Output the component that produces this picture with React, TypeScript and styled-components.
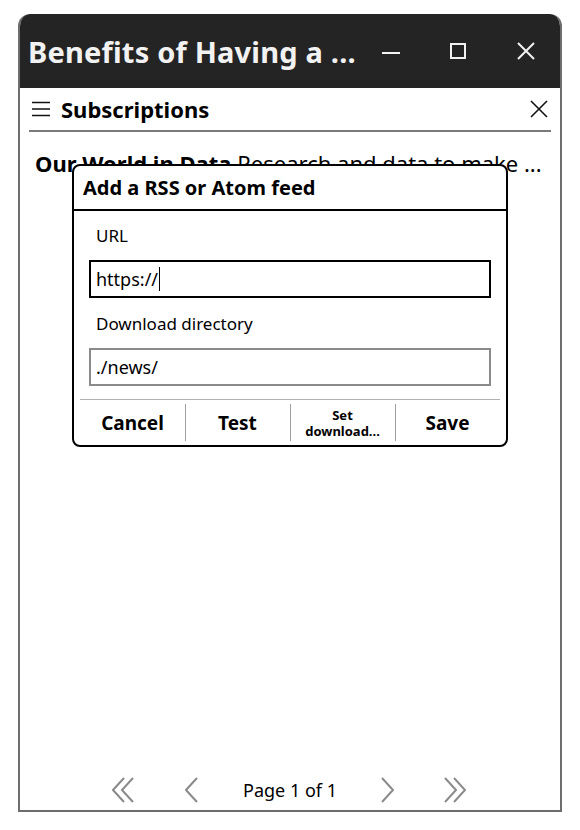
import styled, { createGlobalStyle } from "styled-components";

const GlobalStyle = createGlobalStyle`
  html, body {
    margin: 0;
    padding: 0;
    background: #ffffff;
    font-family: "Noto Sans", "Open Sans", sans-serif;
    color: #000;
  }
`;

const Page = styled.div`
  width: 580px;
  height: 830px;
  padding: 14px 18px 0;
  box-sizing: border-box;
`;

const Window = styled.div`
  width: 544px;
  height: 798px;
  display: flex;
  flex-direction: column;
  border: 2px solid #6d6d6d;
  border-top: none;
  border-radius: 12px 12px 0 0;
  box-sizing: border-box;
  overflow: hidden;
  background: #fff;
`;

const TitleBar = styled.div`
  height: 74px;
  flex-shrink: 0;
  background: #242424;
  display: flex;
  align-items: center;
  padding: 0 2px 0 8px;
  margin: 0 -2px;
  border-radius: 12px 12px 0 0;
  color: #f2f2f2;
`;

const WindowTitle = styled.div`
  flex: 1;
  min-width: 0;
  font-size: 29px;
  font-weight: 700;
  white-space: nowrap;
  overflow: hidden;
  letter-spacing: 0.2px;
  padding-left: 2px;
`;

const WinButton = styled.div<{ $w: number }>`
  width: ${(p) => p.$w}px;
  flex-shrink: 0;
  height: 74px;
  display: flex;
  align-items: center;
  justify-content: center;
`;

const Body = styled.div`
  flex: 1;
  position: relative;
  display: flex;
  flex-direction: column;
`;

const Header = styled.div`
  margin: 0 9px;
  height: 42px;
  display: flex;
  align-items: center;
  border-bottom: 2px solid #7a7a7a;
  padding: 0 3px;
`;

const HeaderTitle = styled.div`
  flex: 1;
  font-size: 22px;
  font-weight: 700;
  margin-left: 11px;
`;

const List = styled.div`
  flex: 1;
  padding: 17px 15px 0;
`;

const Item = styled.div`
  font-size: 22px;
  line-height: 28px;
  white-space: nowrap;
  b {
    font-weight: 700;
  }
`;

const Pager = styled.div`
  height: 40px;
  display: flex;
  align-items: center;
  justify-content: center;
`;

const PagerButton = styled.div`
  width: 68px;
  display: flex;
  align-items: center;
  justify-content: center;
`;

const PageLabel = styled.div`
  font-size: 18px;
  width: 128px;
  text-align: center;
`;

const Dialog = styled.div`
  position: absolute;
  left: 52px;
  top: 76px;
  width: 436px;
  box-sizing: border-box;
  background: #fff;
  border: 2px solid #000;
  border-radius: 8px;
`;

const DialogTitle = styled.div`
  height: 43px;
  display: flex;
  align-items: center;
  padding: 0 9px;
  font-size: 20px;
  font-weight: 700;
  border-bottom: 2px solid #000;
`;

const DialogBody = styled.div`
  padding: 13px 15px 13px;
`;

const Label = styled.div<{ $gap?: number }>`
  font-size: 17px;
  line-height: 24px;
  padding-left: 7px;
  margin-top: ${(p) => p.$gap ?? 0}px;
  margin-bottom: 12px;
`;

const Field = styled.div<{ $focused?: boolean }>`
  height: 38px;
  box-sizing: border-box;
  border: 2px solid ${(p) => (p.$focused ? "#000" : "#8a8a8a")};
  display: flex;
  align-items: center;
  padding: 0 5px;
  font-size: 18px;
`;

const Caret = styled.span`
  display: inline-block;
  width: 1px;
  height: 24px;
  background: #000;
  margin-left: 1px;
`;

const ButtonRow = styled.div`
  margin: 0 6px;
  border-top: 1px solid #b0b0b0;
  height: 45px;
  display: grid;
  grid-template-columns: repeat(4, 1fr);
`;

const DialogButton = styled.div<{ $small?: boolean }>`
  display: flex;
  flex-direction: column;
  align-items: center;
  justify-content: center;
  text-align: center;
  font-weight: 700;
  font-size: ${(p) => (p.$small ? 13 : 19)}px;
  line-height: ${(p) => (p.$small ? 16 : 24)}px;
  position: relative;
  &:not(:first-child)::before {
    content: "";
    position: absolute;
    left: 0;
    top: 4px;
    bottom: 4px;
    width: 1px;
    background: #a0a0a0;
  }
`;

const Chevron = ({ dir, double }: { dir: "left" | "right"; double?: boolean }) => {
  const pts = (x: number) =>
    dir === "left" ? `${x + 11},1 ${x},13 ${x + 11},25` : `${x},1 ${x + 11},13 ${x},25`;
  return (
    <svg width={double ? 24 : 14} height="27" viewBox={`0 0 ${double ? 24 : 14} 27`} fill="none" stroke="#8a8a8a" strokeWidth="2">
      {double ? (
        <>
          <polyline points={pts(1)} />
          <polyline points={pts(10)} />
        </>
      ) : (
        <polyline points={pts(1)} />
      )}
    </svg>
  );
};

export default function App() {
  return (
    <Page>
      <GlobalStyle />
      <Window>
        <TitleBar>
          <WindowTitle>Benefits of Having a ...</WindowTitle>
          <WinButton $w={66}>
            <svg width="20" height="20" viewBox="0 0 20 20">
              <line x1="1" y1="12" x2="19" y2="12" stroke="#f2f2f2" strokeWidth="2" />
            </svg>
          </WinButton>
          <WinButton $w={68}>
            <svg width="18" height="18" viewBox="0 0 18 18">
              <rect x="2" y="2" width="14" height="14" fill="none" stroke="#f2f2f2" strokeWidth="2" />
            </svg>
          </WinButton>
          <WinButton $w={68}>
            <svg width="18" height="18" viewBox="0 0 18 18">
              <path d="M1 1 L17 17 M17 1 L1 17" stroke="#f2f2f2" strokeWidth="2" />
            </svg>
          </WinButton>
        </TitleBar>
        <Body>
          <Header>
            <svg width="18" height="16" viewBox="0 0 18 16">
              <path d="M0 1.5 H18 M0 8 H18 M0 14.5 H18" stroke="#111" strokeWidth="1.5" />
            </svg>
            <HeaderTitle>Subscriptions</HeaderTitle>
            <svg width="18" height="18" viewBox="0 0 18 18">
              <path d="M1 1 L17 17 M17 1 L1 17" stroke="#111" strokeWidth="1.6" />
            </svg>
          </Header>
          <List>
            <Item>
              <b>Our World in Data</b> Research and data to make ...
            </Item>
          </List>
          <Pager>
            <PagerButton>
              <Chevron dir="left" double />
            </PagerButton>
            <PagerButton>
              <Chevron dir="left" />
            </PagerButton>
            <PageLabel>Page 1 of 1</PageLabel>
            <PagerButton>
              <Chevron dir="right" />
            </PagerButton>
            <PagerButton>
              <Chevron dir="right" double />
            </PagerButton>
          </Pager>
          <Dialog>
            <DialogTitle>Add a RSS or Atom feed</DialogTitle>
            <DialogBody>
              <Label>URL</Label>
              <Field $focused>
                https://
                <Caret />
              </Field>
              <Label $gap={14}>Download directory</Label>
              <Field>./news/</Field>
            </DialogBody>
            <ButtonRow>
              <DialogButton>Cancel</DialogButton>
              <DialogButton>Test</DialogButton>
              <DialogButton $small>
                <span>Set</span>
                <span>download...</span>
              </DialogButton>
              <DialogButton>Save</DialogButton>
            </ButtonRow>
          </Dialog>
        </Body>
      </Window>
    </Page>
  );
}
